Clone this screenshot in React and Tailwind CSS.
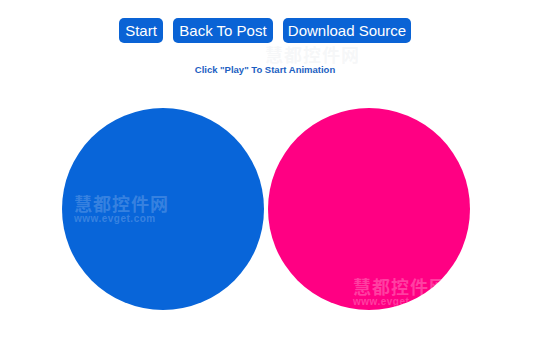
import React from 'react';

const buttons = [
  { label: 'Start', w: 'w-[44px]' },
  { label: 'Back To Post', w: 'w-[100px]' },
  { label: 'Download Source', w: 'w-[128px]' },
];

const Watermark = ({ className, url = true }) => (
  <div className={`absolute pointer-events-none select-none leading-none ${className}`}>
    <div className="text-[18px] font-bold tracking-[1px] leading-[18px]" style={{ fontFamily: '"Noto Sans CJK SC", sans-serif' }}>慧都控件网</div>
    {url && <div className="text-[10px] font-bold tracking-[0.5px] mt-[2px] leading-[10px]">www.evget.com</div>}
  </div>
);

const App = () => {
  return (
    <div className="relative w-[540px] h-[348px] bg-white overflow-hidden" style={{ fontFamily: '"Liberation Sans", Arial, sans-serif' }}>
      <div className="flex flex-col items-center pt-[18px] pr-[10px]">
        <div className="flex gap-[10px]">
          {buttons.map((b) => (
            <button key={b.label} className={`${b.w} h-[25px] rounded-[5px] bg-[#0a63d5] text-white text-[15px] leading-none text-center`}>
              {b.label}
            </button>
          ))}
        </div>
        <p className="mt-[22px] text-[9.5px] font-bold text-[#1d5fc2] leading-none">Click "Play" To Start Animation</p>
        <div className="flex gap-[4px] mt-[33px] pl-[2px]">
          <div className="w-[202px] h-[202px] rounded-full bg-[#0865d9]" />
          <div className="w-[202px] h-[202px] rounded-full bg-[#ff0083]" />
        </div>
      </div>
      <Watermark className="left-[74px] top-[194px] text-white/20" />
      <Watermark className="left-[353px] top-[277px] text-white/25" />
      <Watermark className="left-[265px] top-[45px] text-gray-300/20" url={false} />
    </div>
  );
};

export default App;
